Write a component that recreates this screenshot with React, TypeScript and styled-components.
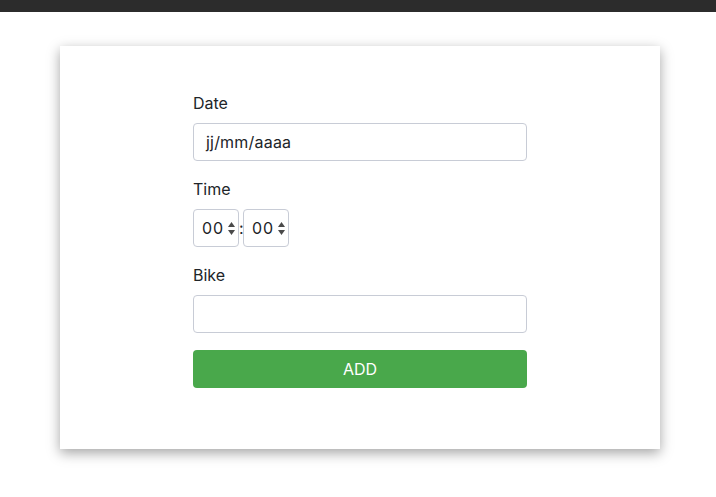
import React from "react";
import styled, { createGlobalStyle } from "styled-components";

const Global = createGlobalStyle`
  html, body { margin: 0; padding: 0; background: #fff; }
  body { font-family: Inter, "Noto Sans", sans-serif; color: #212529; }
`;

const TopBar = styled.div`
  height: 12px;
  background: #2c2c2c;
`;

const Page = styled.div`
  display: flex;
  justify-content: center;
  padding: 34px 0 40px 4px;
`;

const Card = styled.div`
  width: 600px;
  background: #fff;
  box-shadow: 0 4px 12px rgba(0, 0, 0, 0.36);
  padding: 45px 0 61px;
  display: flex;
  justify-content: center;
`;

const Form = styled.form`
  width: 334px;
  display: flex;
  flex-direction: column;
`;

const Label = styled.label`
  font-size: 16px;
  line-height: 24px;
  margin-bottom: 8px;
`;

const Field = styled.div<{ $mb?: number }>`
  display: flex;
  flex-direction: column;
  margin-bottom: ${(p) => p.$mb ?? 16}px;
`;

const Input = styled.div`
  box-sizing: border-box;
  height: 38px;
  border: 1px solid #c8ccd6;
  border-radius: 4px;
  padding: 0 12px;
  display: flex;
  align-items: center;
  font-size: 16px;
  letter-spacing: 0.2px;
  color: #212529;
`;

const TimeRow = styled.div`
  display: flex;
  align-items: center;
`;

const Select = styled.div`
  box-sizing: border-box;
  width: 46px;
  height: 38px;
  border: 1px solid #c8ccd6;
  border-radius: 4px;
  padding: 0 0 0 8px;
  display: flex;
  align-items: center;
  font-size: 16px;
  letter-spacing: 0.8px;
  gap: 4px;
`;

const Colon = styled.span`
  width: 4px;
  text-align: center;
  font-size: 16px;
`;

const Button = styled.button`
  height: 38px;
  border: none;
  border-radius: 4px;
  background: #49a84b;
  color: #fff;
  font-family: inherit;
  font-size: 16px;
  padding: 0;
  margin-top: 1px;
`;

const Arrows = () => (
  <svg width="7" height="13" viewBox="0 0 7 13">
    <path d="M3.5 0 L7 5 L0 5 Z" fill="#4a4a4a" />
    <path d="M3.5 13 L7 8 L0 8 Z" fill="#4a4a4a" />
  </svg>
);

export default function App() {
  return (
    <>
      <Global />
      <TopBar />
      <Page>
        <Card>
          <Form>
            <Field>
              <Label>Date</Label>
              <Input>jj/mm/aaaa</Input>
            </Field>
            <Field>
              <Label>Time</Label>
              <TimeRow>
                <Select>
                  <span>00</span>
                  <Arrows />
                </Select>
                <Colon>:</Colon>
                <Select>
                  <span>00</span>
                  <Arrows />
                </Select>
              </TimeRow>
            </Field>
            <Field>
              <Label>Bike</Label>
              <Input />
            </Field>
            <Button type="button">ADD</Button>
          </Form>
        </Card>
      </Page>
    </>
  );
}
